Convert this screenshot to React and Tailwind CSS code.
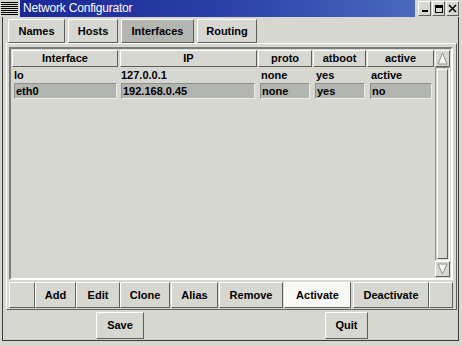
export default function App() {
  const raised =
    "border border-t-white border-l-white border-b-[#5e605b] border-r-[#5e605b]";
  const menuLines = [0, 1, 2, 3, 4, 5, 6];
  return (
    <div className="w-[462px] h-[346px] bg-[#d5d7d0] overflow-hidden flex flex-col font-['Liberation_Sans',Arial,sans-serif] text-black">
      {/* Title bar */}
      <div className="h-[17px] flex shrink-0">
        <div className="w-[20px] h-[17px] bg-[#d5d7d0] flex flex-col justify-center gap-[1px] pl-[1px] pr-[2px]">
          {menuLines.map((i) => (
            <div key={i} className="h-[1px] bg-black" />
          ))}
        </div>
        <div className="flex-1 bg-gradient-to-r from-[#1a2896] via-[#2a3ea8] to-[#4a68bc] text-white text-[12px] tracking-[-0.2px] leading-[17px] pl-[3px] overflow-hidden whitespace-nowrap">
          Network Configurator
        </div>
        <div className="w-[47px] flex items-start pt-[1px] pl-[3px] gap-[1px]">
          <div className={"w-[13px] h-[15px] bg-[#d5d7d0] flex items-end justify-center pb-[3px] " + raised}>
            <div className="w-[6px] h-[2px] bg-black" />
          </div>
          <div className={"w-[13px] h-[15px] bg-[#d5d7d0] flex items-center justify-center " + raised}>
            <div className="w-[8px] h-[8px] border border-black border-t-[3px]" />
          </div>
          <div className={"w-[13px] h-[15px] bg-[#d5d7d0] flex items-center justify-center " + raised}>
            <svg width="9" height="9" viewBox="0 0 9 9">
              <path d="M1 1 L8 8 M8 1 L1 8" stroke="black" strokeWidth="1.5" />
            </svg>
          </div>
        </div>
      </div>

      {/* Window body */}
      <div className="flex-1 pl-[2px] pr-[3px] pb-[5px] flex">
        <div className="flex-1 border-l border-r border-b border-[#3a3a3a] flex flex-col">
          {/* Tabs */}
          <div className="flex h-[24px] mt-[2px] ml-[5px] gap-[3px] text-[11px] font-bold">
            <div className={"w-[57px] flex items-center justify-center " + raised}>Names</div>
            <div className={"w-[50px] flex items-center justify-center " + raised}>Hosts</div>
            <div className={"w-[73px] flex items-center justify-center bg-[#b3b6b0] " + raised}>Interfaces</div>
            <div className={"w-[60px] flex items-center justify-center " + raised}>Routing</div>
          </div>

          {/* Notebook panel */}
          <div className={"ml-[3px] w-[451px] h-[267px] flex flex-col " + raised}>
            {/* List frame */}
            <div className="mt-[3px] ml-[2px] w-[444px] h-[233px] border-2 border-t-[#7c7e79] border-l-[#7c7e79] border-b-white border-r-white p-[1px] flex">
              <div className="w-[422px] flex flex-col text-[11px] font-bold">
                {/* header */}
                <div className="flex h-[17px]">
                  <div className={"w-[106px] flex items-center justify-center " + raised}>Interface</div>
                  <div className={"ml-[2px] w-[137px] flex items-center justify-center " + raised}>IP</div>
                  <div className={"ml-[1px] w-[54px] flex items-center justify-center " + raised}>proto</div>
                  <div className={"ml-[1px] w-[53px] flex items-center justify-center " + raised}>atboot</div>
                  <div className={"ml-[1px] w-[67px] flex items-center justify-center " + raised}>active</div>
                </div>
                {/* row 1 */}
                <div className="flex h-[16px] leading-[16px]">
                  <div className="w-[106px] pl-[2px]">lo</div>
                  <div className="ml-[2px] w-[137px] pl-[1px]">127.0.0.1</div>
                  <div className="ml-[1px] w-[54px] pl-[3px]">none</div>
                  <div className="ml-[1px] w-[53px] pl-[3px]">yes</div>
                  <div className="ml-[1px] w-[67px] pl-[4px]">active</div>
                </div>
                {/* row 2 (selected) */}
                <div className="flex h-[16px] leading-[14px]">
                  <div className="w-[106px] pl-[2px]">
                    <div className="w-[103px] h-[16px] bg-[#b3b6b0] border border-t-[#8e908b] border-l-[#8e908b] border-b-[#eeeeec] border-r-[#eeeeec] pl-[1px]">eth0</div>
                  </div>
                  <div className="ml-[2px] w-[137px] pl-[1px]">
                    <div className="w-[134px] h-[16px] bg-[#b3b6b0] border border-t-[#8e908b] border-l-[#8e908b] border-b-[#eeeeec] border-r-[#eeeeec] pl-[1px]">192.168.0.45</div>
                  </div>
                  <div className="ml-[1px] w-[54px] pl-[2px]">
                    <div className="w-[50px] h-[16px] bg-[#b3b6b0] border border-t-[#8e908b] border-l-[#8e908b] border-b-[#eeeeec] border-r-[#eeeeec] pl-[1px]">none</div>
                  </div>
                  <div className="ml-[1px] w-[53px] pl-[2px]">
                    <div className="w-[50px] h-[16px] bg-[#b3b6b0] border border-t-[#8e908b] border-l-[#8e908b] border-b-[#eeeeec] border-r-[#eeeeec] pl-[1px]">yes</div>
                  </div>
                  <div className="ml-[1px] w-[67px] pl-[3px]">
                    <div className="w-[62px] h-[16px] bg-[#b3b6b0] border border-t-[#8e908b] border-l-[#8e908b] border-b-[#eeeeec] border-r-[#eeeeec] pl-[1px]">no</div>
                  </div>
                </div>
              </div>
              {/* scrollbar */}
              <div className="ml-[1px] w-[15px] flex flex-col">
                <div className={"h-[17px] flex items-center justify-center " + raised}>
                  <svg width="11" height="13" viewBox="0 0 11 13">
                    <polygon points="5.5,1 10,12 1,12" fill="#f4f4f2" stroke="#8e908b" strokeWidth="1" />
                  </svg>
                </div>
                <div className="flex-1 border border-t-[#8e908b] border-l-[#8e908b] border-b-white border-r-white p-[1px] flex">
                  <div className={"flex-1 " + raised} />
                </div>
                <div className={"h-[16px] flex items-center justify-center " + raised}>
                  <svg width="11" height="12" viewBox="0 0 11 12">
                    <polygon points="1,1 10,1 5.5,11" fill="#f4f4f2" stroke="#8e908b" strokeWidth="1" />
                  </svg>
                </div>
              </div>
            </div>

            {/* Button bar */}
            <div className="mt-[2px] ml-[2px] h-[26px] flex text-[11px] font-bold">
              <div className={"w-[26px] " + raised} />
              <div className={"w-[41px] flex items-center justify-center " + raised}>Add</div>
              <div className={"w-[44px] flex items-center justify-center " + raised}>Edit</div>
              <div className={"w-[50px] flex items-center justify-center " + raised}>Clone</div>
              <div className={"ml-[1px] w-[47px] flex items-center justify-center " + raised}>Alias</div>
              <div className={"ml-[1px] w-[64px] flex items-center justify-center " + raised}>Remove</div>
              <div className={"ml-[1px] w-[67px] flex items-center justify-center bg-[#f8f8f6] " + raised}>Activate</div>
              <div className={"ml-[2px] w-[76px] flex items-center justify-center " + raised}>Deactivate</div>
              <div className={"w-[24px] " + raised} />
            </div>
          </div>

          {/* Bottom buttons */}
          <div className="flex mt-[2px] h-[27px] text-[11px] font-bold">
            <div className={"ml-[93px] w-[48px] flex items-center justify-center " + raised}>Save</div>
            <div className={"ml-[181px] w-[43px] flex items-center justify-center " + raised}>Quit</div>
          </div>
        </div>
      </div>
    </div>
  );
}
